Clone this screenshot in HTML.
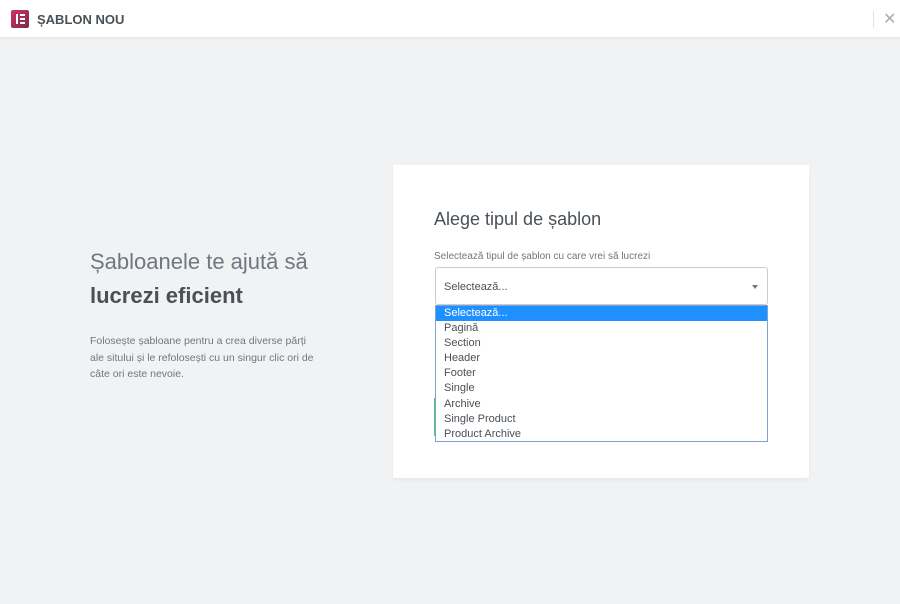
<!DOCTYPE html>
<html><head><meta charset="utf-8"><style>
*{margin:0;padding:0;box-sizing:border-box}
body{width:900px;height:604px;background:#f1f2f4;font-family:"Liberation Sans",sans-serif;position:relative;overflow:hidden;color:#6d7882}
.hdr{position:absolute;left:0;top:0;width:900px;height:37px;background:#fff;box-shadow:0 1px 3px rgba(0,0,0,.08)}
.logo{position:absolute;left:11px;top:10px;width:18px;height:18px;background:linear-gradient(135deg,#d2345e,#7a2a4f);border-radius:2px}
.logo i{position:absolute;background:#fff}
.ttl{position:absolute;left:37px;top:12px;font-size:13px;font-weight:bold;color:#495157}
.sep{position:absolute;left:873px;top:11px;width:1px;height:17px;background:#e0e2e5}
.x{position:absolute;left:883px;top:9px;font-size:16px;color:#a4afb7}
.h1{position:absolute;left:90px;top:245px;font-size:22px;line-height:34px;color:#6d7882}
.h1 b{color:#495157}
.p{position:absolute;left:90px;top:333px;font-size:10.5px;line-height:16.5px;color:#6d7882;width:230px}
.card{position:absolute;left:393px;top:165px;width:416px;height:313px;background:#fff;box-shadow:0 2px 4px rgba(0,0,0,.04)}
.ct{position:absolute;left:434px;top:209px;font-size:18px;color:#495157}
.lbl{position:absolute;left:434px;top:251px;font-size:10px;color:#6d7882}
.sel{position:absolute;left:435px;top:267px;width:333px;height:38px;border:1px solid #c9ccd0;border-radius:3px;font-size:11px;color:#495157;padding:13px 0 0 8px}
.arr{position:absolute;right:9px;top:17px;border:3.5px solid transparent;border-top:4px solid #6d7882}
.green{position:absolute;left:434px;top:398px;width:1px;height:38px;background:#5bc45d}
.dd{position:absolute;left:435px;top:305px;width:333px;height:137px;background:#fff;border:1px solid #7ea1d8;font-size:11px;color:#495157}
.dd div{height:15.1px;line-height:15px;padding-left:8px}
.dd .a{background:#1e90ff;color:#fff}
</style></head><body>
<div class="hdr"><div class="logo"><i style="left:5px;top:4px;width:2px;height:10px"></i><i style="left:9px;top:4px;width:5px;height:2px"></i><i style="left:9px;top:8px;width:5px;height:2px"></i><i style="left:9px;top:12px;width:5px;height:2px"></i></div>
<div class="ttl">ȘABLON NOU</div><div class="sep"></div><div class="x">✕</div></div>
<div class="h1">Șabloanele te ajută să<br><b>lucrezi eficient</b></div>
<div class="p">Folosește șabloane pentru a crea diverse părți ale sitului și le refolosești cu un singur clic ori de câte ori este nevoie.</div>
<div class="card"></div>
<div class="ct">Alege tipul de șablon</div>
<div class="lbl">Selectează tipul de șablon cu care vrei să lucrezi</div>
<div class="sel">Selectează...<span class="arr"></span></div>
<div class="green"></div>
<div class="dd"><div class="a">Selectează...</div><div>Pagină</div><div>Section</div><div>Header</div><div>Footer</div><div>Single</div><div>Archive</div><div>Single Product</div><div>Product Archive</div></div>
</body></html>
